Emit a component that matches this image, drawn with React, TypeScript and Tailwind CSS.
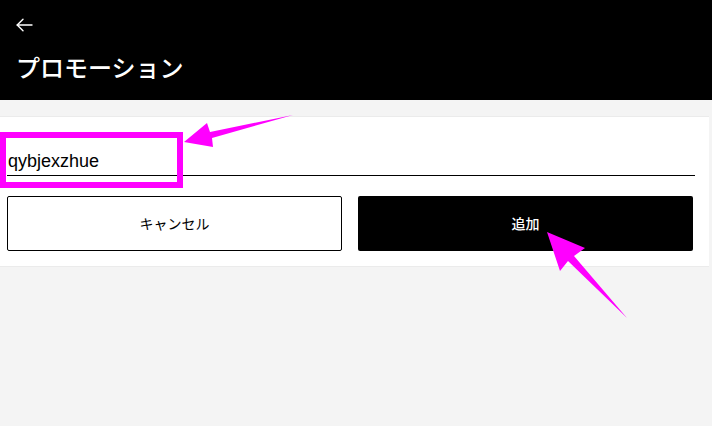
import React from "react";

export default function App() {
  const jp = { fontFamily: '"Noto Sans CJK JP", "Noto Sans", sans-serif' };
  return (
    <div className="relative w-[712px] h-[426px] overflow-hidden bg-[#f4f4f4]">
      <header className="h-[100px] bg-black text-white px-[16px] pt-[18px]">
        <svg width="17" height="14" viewBox="0 0 17 14" fill="none" stroke="white" strokeWidth="1.4" strokeLinecap="round" strokeLinejoin="round">
          <path d="M16 7H1.2" />
          <path d="M7 1.2L1.2 7L7 12.8" />
        </svg>
        <h1 className="mt-[18px] text-[24px] leading-[34px] font-medium" style={jp}>プロモーション</h1>
      </header>
      <main className="pt-[16px]">
        <div className="mr-[3px] bg-white border-y border-[#ebebeb] pt-[33px] pb-[15px] pl-[7px] pr-[14px]">
          <div className="border-b border-black pb-[3px]">
            <div className="text-[18px] leading-[22px] text-black pl-[1px]" style={{ fontFamily: '"Liberation Sans", Arial, sans-serif' }}>qybjexzhue</div>
          </div>
          <div className="mt-[20px] flex gap-[16px] pr-[2px]">
            <button className="w-[335px] h-[55px] border border-black rounded-[2px] bg-white text-black text-[14px] font-normal" style={jp}>キャンセル</button>
            <button className="w-[335px] h-[55px] rounded-[2px] bg-black text-white text-[14px] font-medium" style={jp}>追加</button>
          </div>
        </div>
      </main>
      <svg className="absolute left-0 top-0 pointer-events-none" width="712" height="426" viewBox="0 0 712 426">
        <rect x="3" y="135" width="177" height="50" fill="none" stroke="#ff00ff" strokeWidth="6" />
        <polygon points="184,142 207,123 210,132 293,115 212,138 213,147" fill="#ff00ff" />
        <polygon points="547,232 585,248 574,256 627,318 568,261 560,271" fill="#ff00ff" />
      </svg>
    </div>
  );
}
